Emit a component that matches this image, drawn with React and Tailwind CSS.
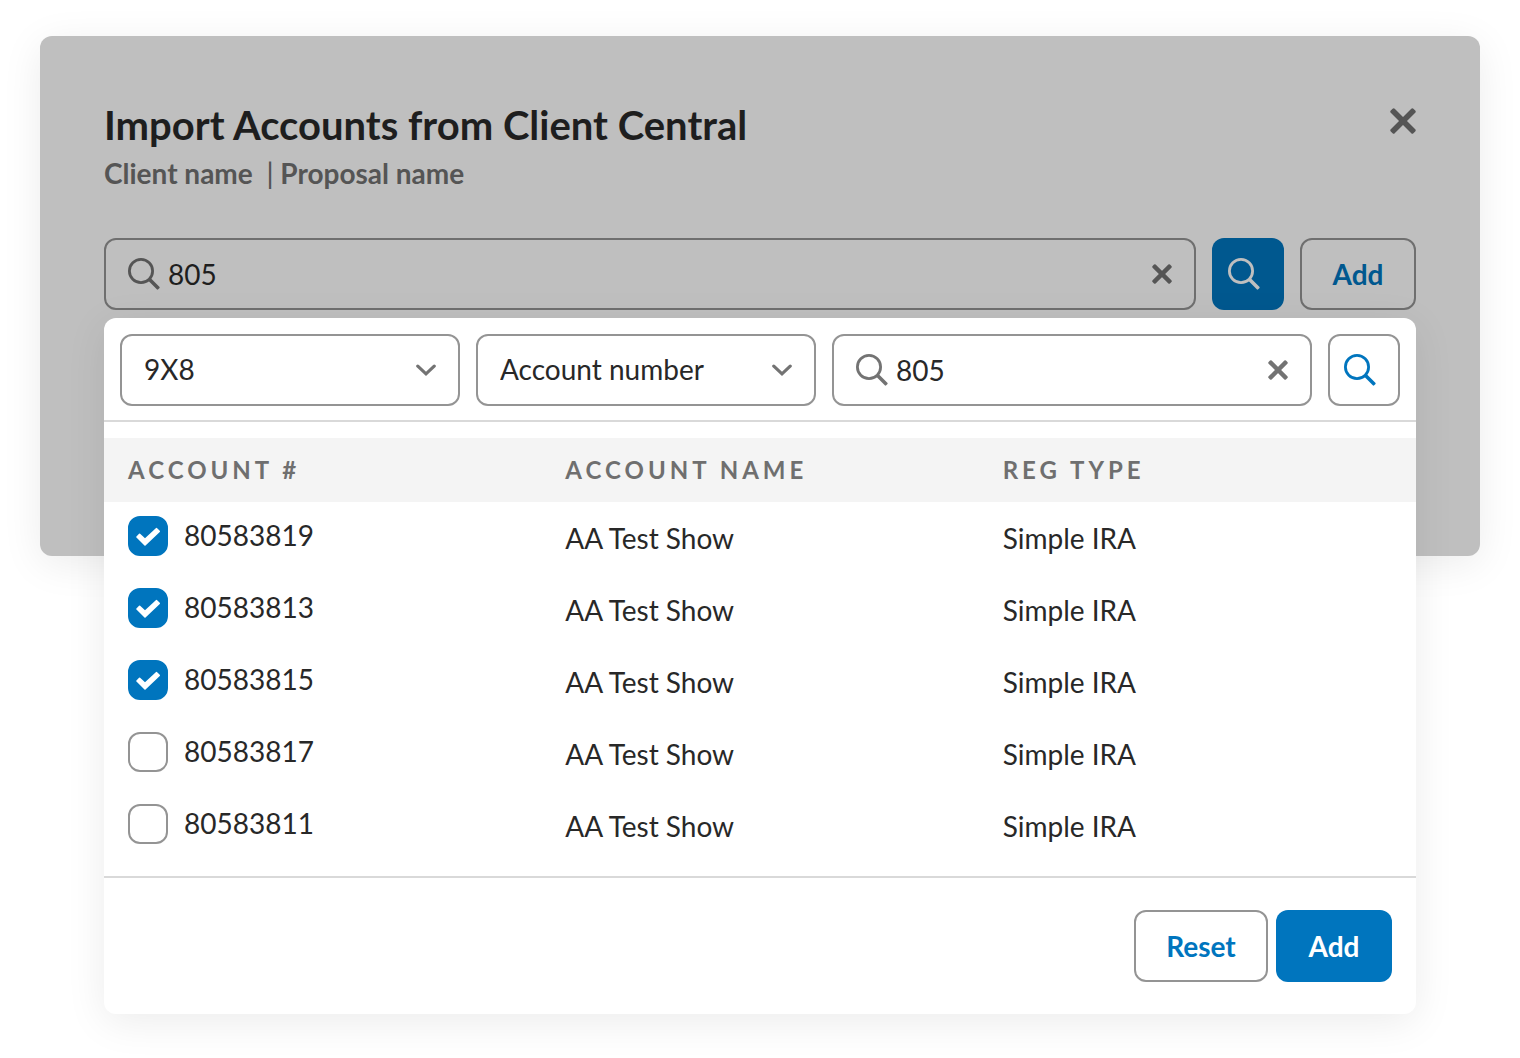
import { useState } from "react";

function SearchIcon({ className }) {
  return (
    <svg viewBox="0 0 32 32" aria-hidden="true" className={`size-8 shrink-0 ${className ?? ""}`}>
      <circle cx="13" cy="13" r="11.6" fill="none" stroke="currentColor" strokeWidth="2.8" />
      <rect x="29.5" y="-1.8" width="14" height="3.6" rx="1" fill="currentColor" transform="rotate(45)" />
    </svg>
  );
}

function CrossIcon({ className }) {
  return (
    <svg viewBox="0 0 26 26" aria-hidden="true" className={className}>
      <g transform="rotate(45 13 13)" fill="currentColor">
        <rect x="-3" y="10.2" width="32" height="5.6" rx="1.5" />
        <rect x="10.2" y="-3" width="5.6" height="32" rx="1.5" />
      </g>
    </svg>
  );
}

function SearchField({ label, value, onChange, tone }) {
  const dim = tone === "dim";
  return (
    <div
      className={`flex h-18 min-w-0 flex-1 items-center gap-2 rounded-xl border-2 px-[22px] ${
        dim ? "border-[#6f6f6f] text-[#555555]" : "border-[#949494] text-[#737373]"
      }`}
    >
      <SearchIcon />
      <input
        type="text"
        aria-label={label}
        value={value}
        onChange={(e) => onChange(e.target.value)}
        className={`min-w-0 flex-1 bg-transparent outline-none ${dim ? "text-[#1e1e1e]" : "text-[#282828]"}`}
      />
      <button type="button" aria-label={`Clear ${label}`} onClick={() => onChange("")}>
        <CrossIcon className="size-5" />
      </button>
    </div>
  );
}

function SelectField({ label, options }) {
  return (
    <div className="grid w-[340px] items-center">
      <select
        aria-label={label}
        className="col-start-1 row-start-1 h-18 w-full appearance-none rounded-xl border-2 border-[#949494] bg-transparent pr-14 pb-0.5 pl-[22px] text-[#282828]"
      >
        {options.map((o) => (
          <option key={o}>{o}</option>
        ))}
      </select>
      <svg
        viewBox="0 0 20 12"
        aria-hidden="true"
        className="pointer-events-none col-start-1 row-start-1 mr-6 h-3 w-5 justify-self-end text-[#737373]"
      >
        <path d="M1.8 2.2 10 9.8 18.2 2.2" fill="none" stroke="currentColor" strokeWidth="3.2" strokeLinecap="round" />
      </svg>
    </div>
  );
}

function Checkbox({ id, checked, onChange }) {
  return (
    <span className="grid size-10 place-items-center">
      <input
        id={id}
        type="checkbox"
        checked={checked}
        onChange={onChange}
        className="peer col-start-1 row-start-1 size-10 appearance-none rounded-xl border-2 border-[#949494] bg-white checked:border-[#0075be] checked:bg-[#0075be]"
      />
      <svg
        viewBox="0 0 24 20"
        aria-hidden="true"
        className="pointer-events-none col-start-1 row-start-1 hidden h-5 w-6 text-white peer-checked:block"
      >
        <path
          d="M3.6 8.4 9 13.4 20.6 2.7 23.2 5.3 9 18.9 1 11Z"
          fill="currentColor"
          stroke="currentColor"
          strokeWidth="1.6"
          strokeLinejoin="round"
        />
      </svg>
    </span>
  );
}

const ACCOUNTS = [
  { number: "80583819", name: "AA Test Show", type: "Simple IRA" },
  { number: "80583813", name: "AA Test Show", type: "Simple IRA" },
  { number: "80583815", name: "AA Test Show", type: "Simple IRA" },
  { number: "80583817", name: "AA Test Show", type: "Simple IRA" },
  { number: "80583811", name: "AA Test Show", type: "Simple IRA" },
];
const INITIAL = ["80583819", "80583813", "80583815"];

function AccountPicker() {
  const [query, setQuery] = useState("805");
  const [selected, setSelected] = useState(INITIAL);
  const toggle = (n) => setSelected((s) => (s.includes(n) ? s.filter((x) => x !== n) : [...s, n]));

  return (
    <div className="absolute inset-x-0 top-full mt-2 rounded-xl bg-white shadow-[0_8px_40px_rgba(0,0,0,0.08)]">
      <div className="flex gap-4 border-b-2 border-[#d9d9d9] px-4 pt-4 pb-3.5">
        <SelectField label="Prefix" options={["9X8"]} />
        <SelectField label="Search by" options={["Account number", "Account name"]} />
        <SearchField label="account search" value={query} onChange={setQuery} />
        <button
          type="button"
          aria-label="Search accounts"
          className="flex size-18 items-center rounded-xl border-2 border-[#949494] pl-3.5 text-[#0075be]"
        >
          <SearchIcon />
        </button>
      </div>

      <table className="mt-4 w-full table-fixed text-left text-[#282828]">
        <thead className="bg-[#f4f4f4] text-2xl tracking-[4px] text-[#6f6f6f] uppercase">
          <tr className="h-16">
            <th scope="col" className="pl-6 font-bold">Account #</th>
            <th scope="col" className="pl-6 font-bold">Account name</th>
            <th scope="col" className="pl-6 font-bold">Reg type</th>
          </tr>
        </thead>
        <tbody>
          {ACCOUNTS.map((a) => (
            <tr key={a.number} className="h-18">
              <td className="pb-1 pl-6">
                <label htmlFor={a.number} className="flex items-center gap-4">
                  <Checkbox id={a.number} checked={selected.includes(a.number)} onChange={() => toggle(a.number)} />
                  <span className="pb-0.5">{a.number}</span>
                </label>
              </td>
              <td className="pl-6">{a.name}</td>
              <td className="pl-6">{a.type}</td>
            </tr>
          ))}
        </tbody>
      </table>

      <div className="mt-3.5 flex justify-end gap-2 border-t-2 border-[#d9d9d9] px-6 py-8 font-bold">
        <button
          type="button"
          onClick={() => setSelected([])}
          className="h-18 min-w-[134px] rounded-xl border-2 border-[#949494] text-[#0075be]"
        >
          Reset
        </button>
        <button type="button" className="h-18 min-w-[116px] rounded-xl bg-[#0075be] text-white">
          Add
        </button>
      </div>
    </div>
  );
}

export default function App() {
  const [query, setQuery] = useState("805");
  return (
    <main className="min-h-screen px-10 pt-9 font-['Lato',sans-serif] text-[28px] leading-9">
      <section
        role="dialog"
        aria-labelledby="dialog-title"
        className="min-h-[520px] rounded-xl bg-[#bfbfbf] px-16 pt-16 shadow-[0_8px_40px_rgba(0,0,0,0.08)]"
      >
        <header className="flex items-start justify-between">
          <div>
            <h1 id="dialog-title" className="text-[40px] leading-[50px] font-bold text-[#1e1e1e]">
              Import Accounts from Client Central
            </h1>
            <p className="mt-[5px] font-bold whitespace-pre text-[#555555]">
              Client name  <span className="font-medium">|</span> Proposal name
            </p>
          </div>
          <button type="button" aria-label="Close" className="mt-2 text-[#555555]">
            <CrossIcon className="size-[26px]" />
          </button>
        </header>

        <div className="relative mt-[47px]">
          <div className="flex gap-4">
            <SearchField label="client search" value={query} onChange={setQuery} tone="dim" />
            <button
              type="button"
              aria-label="Search clients"
              className="flex size-18 items-center rounded-xl bg-[#00588f] pl-4 text-[#bfbfbf]"
            >
              <SearchIcon />
            </button>
            <button
              type="button"
              className="h-18 min-w-[116px] rounded-xl border-2 border-[#6f6f6f] font-bold text-[#00588f]"
            >
              Add
            </button>
          </div>
          <AccountPicker />
        </div>
      </section>
    </main>
  );
}
